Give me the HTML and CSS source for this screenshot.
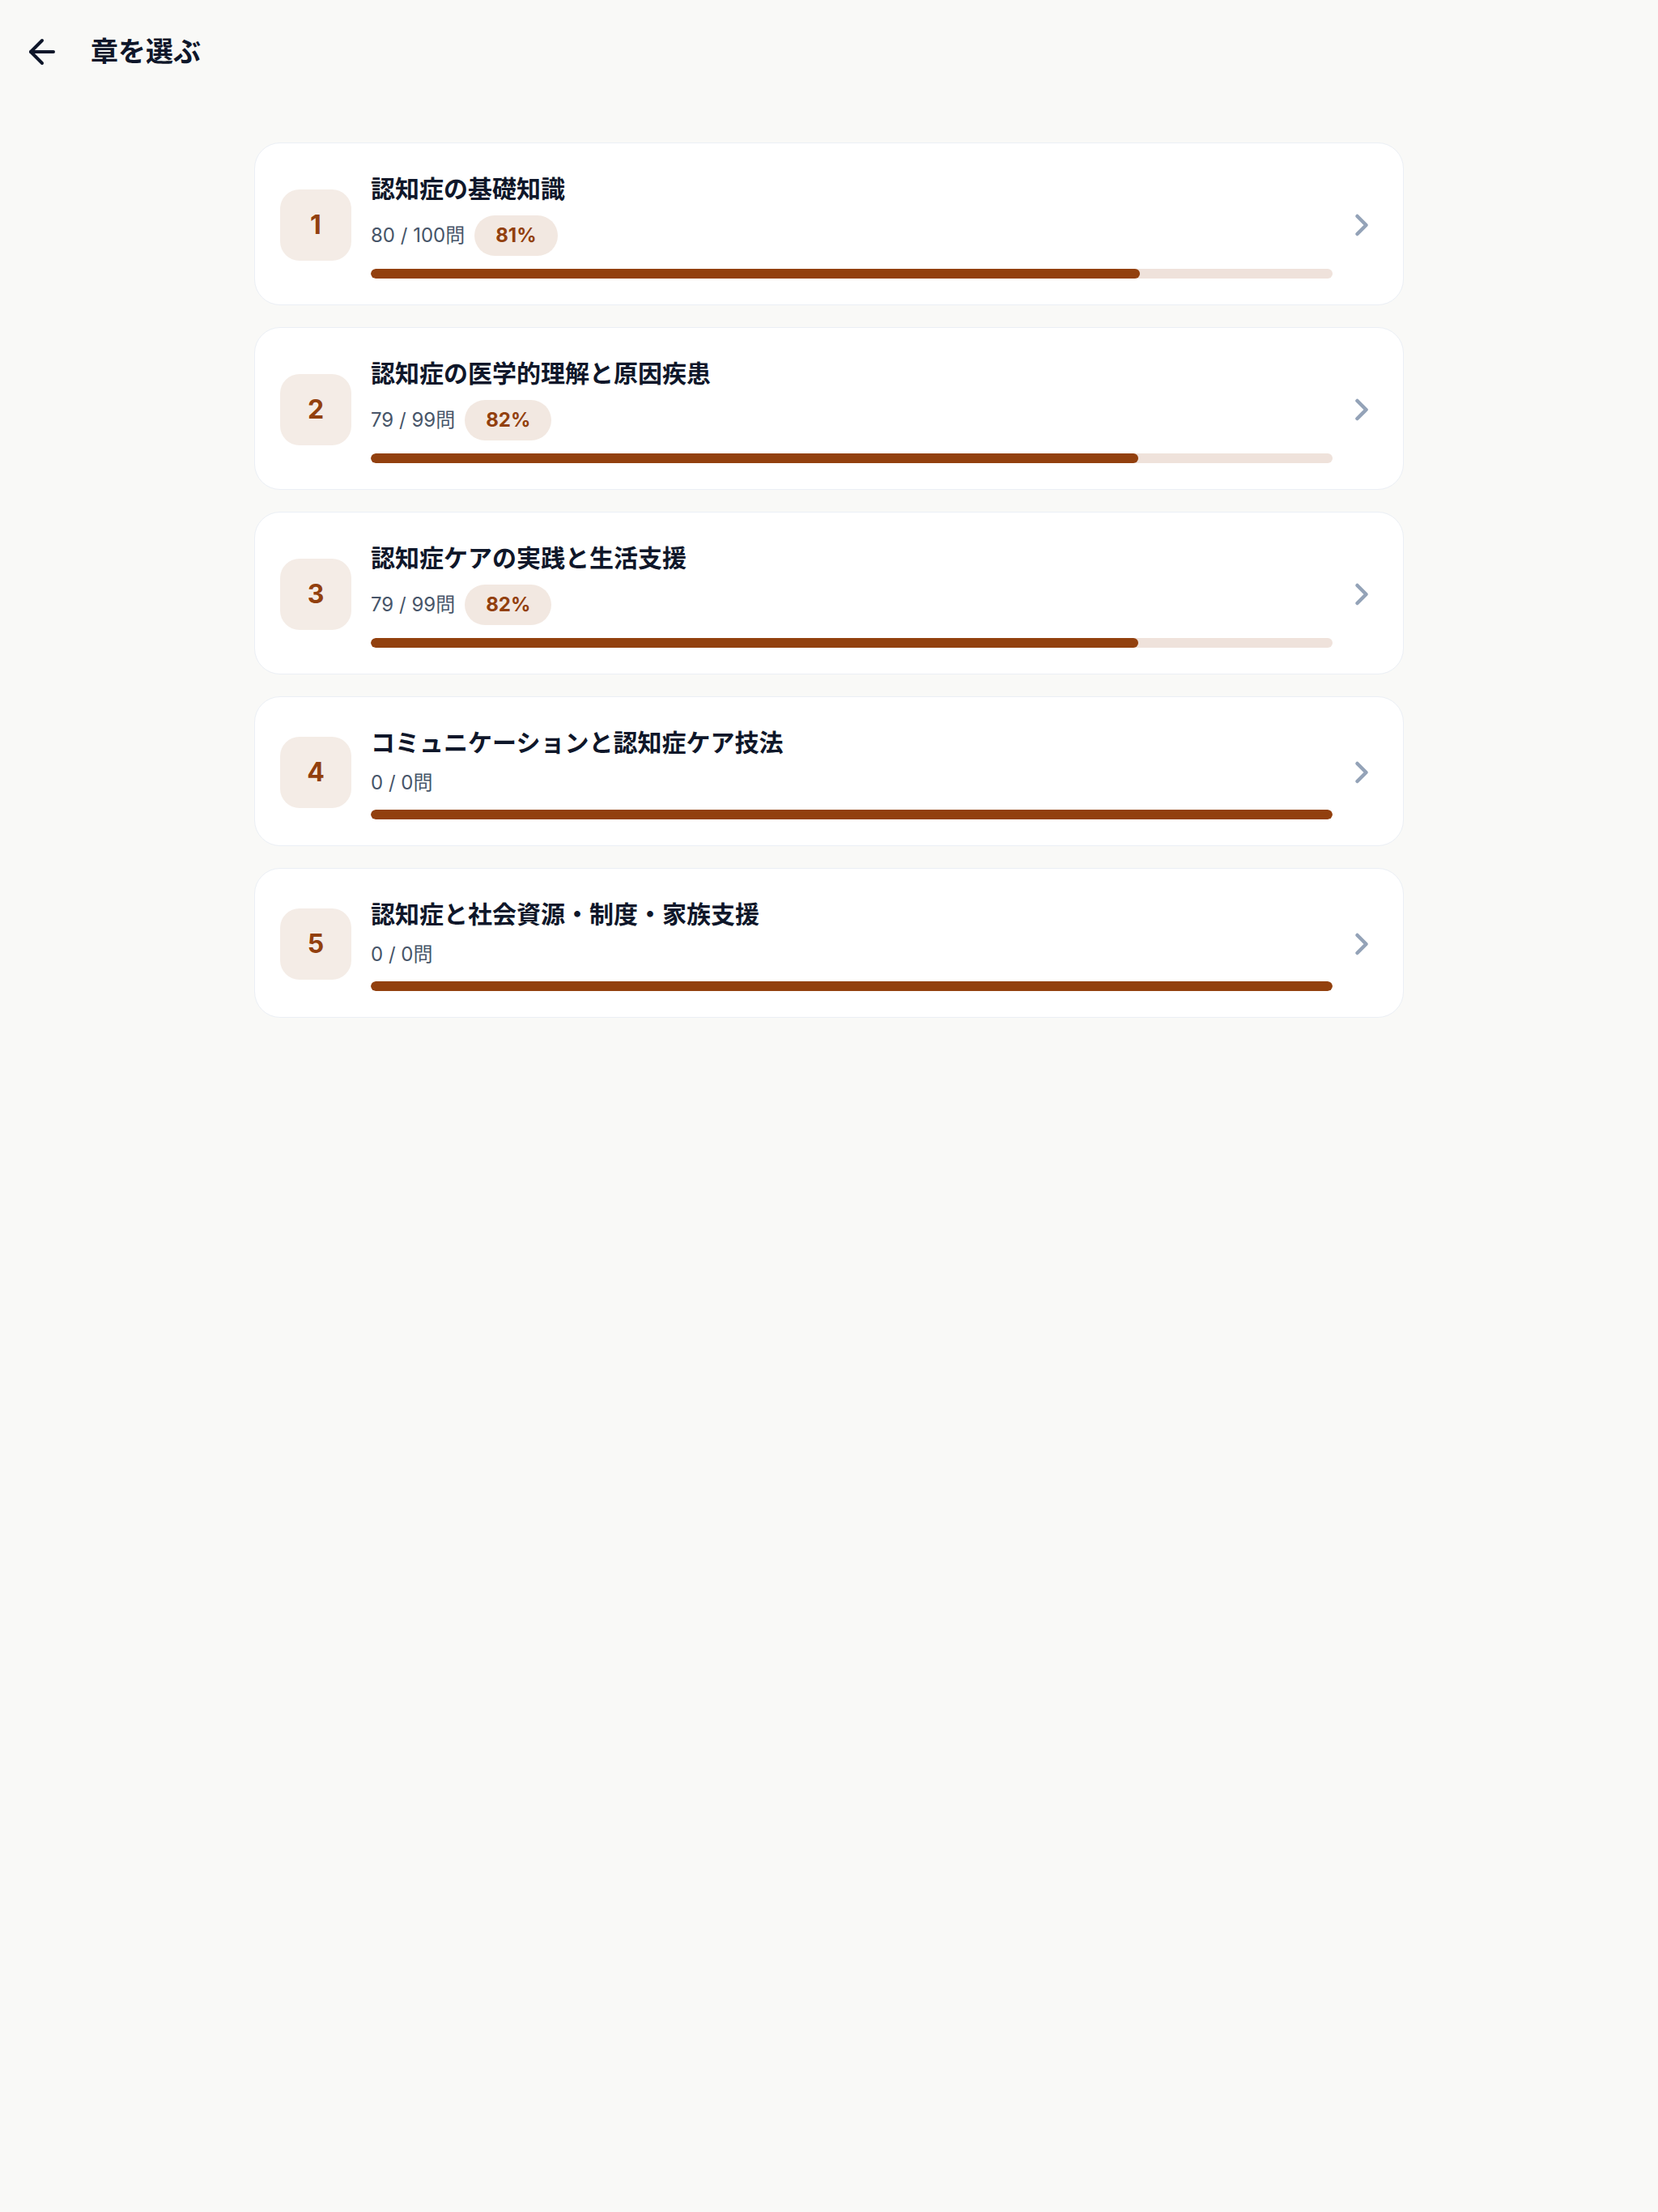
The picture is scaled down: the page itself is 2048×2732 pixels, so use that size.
FILE: index.html
```html
<!DOCTYPE html>
<html lang="ja">
<head>
    <meta charset="UTF-8">
    <meta name="viewport" content="width=device-width, initial-scale=1.0">
    <title>章を選ぶ</title>
    <link rel="stylesheet" href="styles.css">
</head>
<body>
    <header class="topbar">
        <button class="back-btn" aria-label="戻る">
            <svg viewBox="0 0 24 24" fill="none" stroke="currentColor" stroke-width="2" stroke-linecap="round" stroke-linejoin="round">
                <path d="m12 19-7-7 7-7"/>
                <path d="M19 12H5"/>
            </svg>
        </button>
        <h1 class="page-title">章を選ぶ</h1>
    </header>

    <main class="chapter-list">
        <a class="chapter-card" href="#">
            <div class="chapter-num">1</div>
            <div class="chapter-body">
                <h2 class="chapter-title">認知症の基礎知識</h2>
                <div class="chapter-meta">
                    <span class="chapter-count">80 / 100問</span>
                    <span class="chapter-rate">81%</span>
                </div>
                <div class="progress"><div class="progress-fill" style="width: 80%"></div></div>
            </div>
            <svg class="chevron" viewBox="0 0 24 24" fill="none" stroke="currentColor" stroke-width="2.5" stroke-linecap="round" stroke-linejoin="round"><path d="m9 18 6-6-6-6"/></svg>
        </a>

        <a class="chapter-card" href="#">
            <div class="chapter-num">2</div>
            <div class="chapter-body">
                <h2 class="chapter-title">認知症の医学的理解と原因疾患</h2>
                <div class="chapter-meta">
                    <span class="chapter-count">79 / 99問</span>
                    <span class="chapter-rate">82%</span>
                </div>
                <div class="progress"><div class="progress-fill" style="width: 79.8%"></div></div>
            </div>
            <svg class="chevron" viewBox="0 0 24 24" fill="none" stroke="currentColor" stroke-width="2.5" stroke-linecap="round" stroke-linejoin="round"><path d="m9 18 6-6-6-6"/></svg>
        </a>

        <a class="chapter-card" href="#">
            <div class="chapter-num">3</div>
            <div class="chapter-body">
                <h2 class="chapter-title">認知症ケアの実践と生活支援</h2>
                <div class="chapter-meta">
                    <span class="chapter-count">79 / 99問</span>
                    <span class="chapter-rate">82%</span>
                </div>
                <div class="progress"><div class="progress-fill" style="width: 79.8%"></div></div>
            </div>
            <svg class="chevron" viewBox="0 0 24 24" fill="none" stroke="currentColor" stroke-width="2.5" stroke-linecap="round" stroke-linejoin="round"><path d="m9 18 6-6-6-6"/></svg>
        </a>

        <a class="chapter-card" href="#">
            <div class="chapter-num">4</div>
            <div class="chapter-body">
                <h2 class="chapter-title">コミュニケーションと認知症ケア技法</h2>
                <div class="chapter-meta">
                    <span class="chapter-count">0 / 0問</span>
                </div>
                <div class="progress"><div class="progress-fill" style="width: 100%"></div></div>
            </div>
            <svg class="chevron" viewBox="0 0 24 24" fill="none" stroke="currentColor" stroke-width="2.5" stroke-linecap="round" stroke-linejoin="round"><path d="m9 18 6-6-6-6"/></svg>
        </a>

        <a class="chapter-card" href="#">
            <div class="chapter-num">5</div>
            <div class="chapter-body">
                <h2 class="chapter-title">認知症と社会資源・制度・家族支援</h2>
                <div class="chapter-meta">
                    <span class="chapter-count">0 / 0問</span>
                </div>
                <div class="progress"><div class="progress-fill" style="width: 100%"></div></div>
            </div>
            <svg class="chevron" viewBox="0 0 24 24" fill="none" stroke="currentColor" stroke-width="2.5" stroke-linecap="round" stroke-linejoin="round"><path d="m9 18 6-6-6-6"/></svg>
        </a>
    </main>
</body>
</html>
```

FILE: styles.css
```css
* {
    box-sizing: border-box;
}

body {
    margin: 0;
    background: #f9f9f7;
    color: #0f172a;
    font-family: Inter, "Noto Sans CJK JP", sans-serif;
}

/* Header */
.topbar {
    display: flex;
    align-items: center;
    height: 128px;
    padding: 0 28px;
}

.back-btn {
    width: 48px;
    height: 48px;
    padding: 0;
    border: none;
    background: none;
    color: #0f172a;
    cursor: pointer;
}

.back-btn svg {
    display: block;
    width: 48px;
    height: 48px;
}

.page-title {
    margin: 0 0 0 36px;
    font-size: 34px;
    font-weight: 700;
    line-height: 1.4;
}

/* Chapter list */
.chapter-list {
    display: flex;
    flex-direction: column;
    gap: 27px;
    max-width: 1420px;
    margin: 0 auto;
    padding-top: 48px;
}

.chapter-card {
    display: flex;
    align-items: center;
    padding: 34px 29px 32px 31px;
    background: #fff;
    border: 1px solid #ebeff5;
    border-radius: 32px;
    color: inherit;
    text-decoration: none;
}

.chapter-num {
    flex: none;
    display: flex;
    align-items: center;
    justify-content: center;
    width: 88px;
    height: 88px;
    border-radius: 24px;
    background: #f4ece6;
    color: #92400e;
    font-size: 32px;
    font-weight: 700;
}

.chapter-body {
    flex: 1;
    min-width: 0;
    margin-left: 24px;
}

.chapter-title {
    margin: 0 0 11px;
    font-size: 30px;
    font-weight: 700;
    line-height: 44px;
}

.chapter-meta {
    display: flex;
    align-items: center;
    gap: 12px;
}

.chapter-count {
    color: #475569;
    font-size: 24px;
    line-height: 34px;
}

.chapter-rate {
    padding: 10px 26px;
    border-radius: 999px;
    background: #f2e8e1;
    color: #92400e;
    font-size: 24px;
    font-weight: 700;
    line-height: 30px;
}

.progress {
    height: 12px;
    margin-top: 16px;
    border-radius: 6px;
    background: #efe2db;
    overflow: hidden;
}

.progress-fill {
    height: 100%;
    border-radius: 6px;
    background: #92400e;
}

.chevron {
    flex: none;
    width: 44px;
    height: 44px;
    margin-left: 14px;
    color: #94a3b8;
}
```
